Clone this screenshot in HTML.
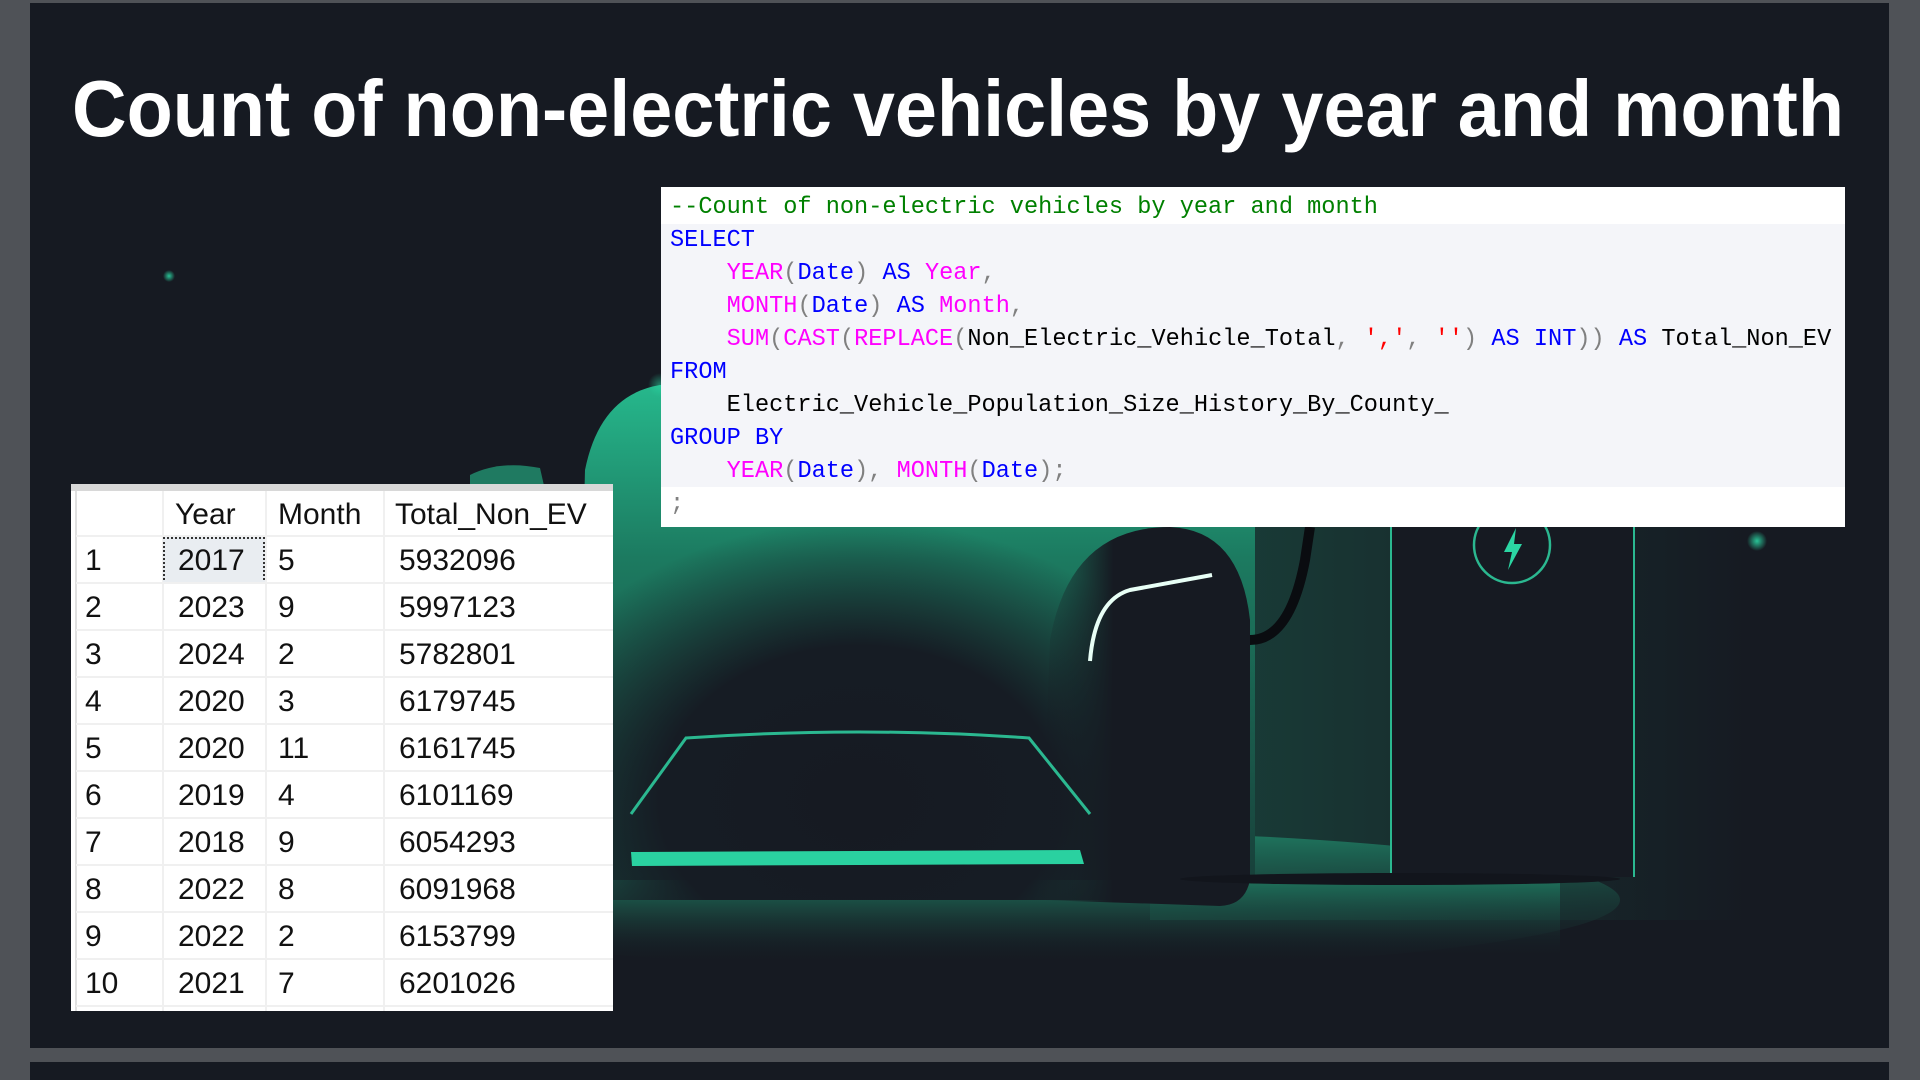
<!DOCTYPE html>
<html><head><meta charset="utf-8"><style>
*{margin:0;padding:0;box-sizing:border-box}
body{width:1920px;height:1080px;background:#4f5257;position:relative;overflow:hidden;font-family:"Liberation Sans",sans-serif}
#slide{position:absolute;left:30px;top:3px;width:1859px;height:1045px;background:#161a22;overflow:hidden}
#strip{position:absolute;left:30px;top:1062px;width:1859px;height:18px;background:#161a22}
#code{position:absolute;left:661px;top:187px;width:1184px;height:340px;background:#fff;font-family:"Liberation Mono",monospace;font-size:23.6px;color:#000}
#code .g{position:absolute;left:0;top:37px;width:100%;height:263px;background:#f4f5f9}
#code .l{position:absolute;left:9px;height:33px;line-height:33px;white-space:pre}
.c{color:#008000}.k{color:#0000ff}.f{color:#ff00ff}.p{color:#808080}.s{color:#ff0000}
#tbl{position:absolute;left:71px;top:484px;width:542px;height:527px;background:#fff;overflow:hidden;border-top:7px solid #d8d8d8}
#tbl .row{position:absolute;left:5px;width:537px;height:47px;border-bottom:2px solid #f0f0f0;font-size:30px;color:#111}
#tbl .row span{position:absolute;top:7px}
#tbl .vl{position:absolute;top:0;width:2px;height:527px;background:#f0f0f0}
</style></head><body>
<div id="slide">
<svg width="1859" height="1045" viewBox="30 3 1859 1045" style="position:absolute;left:0;top:0">
<defs>
<radialGradient id="gl" cx="0.5" cy="0.5" r="0.5"><stop offset="0" stop-color="#2bd6a3" stop-opacity="0.9"/><stop offset="1" stop-color="#2bd6a3" stop-opacity="0"/></radialGradient>
<linearGradient id="body" x1="0" y1="0" x2="0" y2="1"><stop offset="0" stop-color="#26b88c"/><stop offset="0.35" stop-color="#1c7a60"/><stop offset="1" stop-color="#18403a"/></linearGradient>
<linearGradient id="floor" x1="0" y1="0" x2="0" y2="1"><stop offset="0" stop-color="#1f7a61"/><stop offset="1" stop-color="#161a22" stop-opacity="0"/></linearGradient>
<linearGradient id="bg2" x1="0" y1="0" x2="1" y2="0"><stop offset="0" stop-color="#1a4a40"/><stop offset="1" stop-color="#161a22"/></linearGradient>
<radialGradient id="dark" cx="0.5" cy="0.75" r="0.7"><stop offset="0" stop-color="#161a22"/><stop offset="0.55" stop-color="#161c24"/><stop offset="1" stop-color="#161c24" stop-opacity="0"/></radialGradient>
<linearGradient id="arch" x1="0" y1="0" x2="1" y2="0"><stop offset="0" stop-color="#161a22" stop-opacity="0"/><stop offset="0.35" stop-color="#161a22"/><stop offset="1" stop-color="#161a22"/></linearGradient>
</defs>
<rect x="1150" y="500" width="600" height="420" fill="url(#bg2)" opacity="0.8"/>
<ellipse cx="1000" cy="900" rx="620" ry="70" fill="url(#floor)"/>
<rect x="560" y="880" width="1000" height="80" fill="url(#floor)" opacity="0.8"/>
<path d="M575 880 L585 470 Q600 395 660 385 L1200 385 Q1250 395 1255 470 L1255 880 Z" fill="url(#body)"/>
<rect x="600" y="500" width="520" height="400" fill="url(#dark)"/>
<path d="M1040 900 L1050 640 Q1070 527 1170 527 Q1240 530 1250 620 L1250 880 Q1245 905 1220 906 Z" fill="url(#arch)"/>
<path d="M631 814 L686 738 Q860 726 1029 738 L1090 814" fill="none" stroke="#2bb890" stroke-width="3"/>
<path d="M631 852 L1080 850 L1084 864 L632 866 Z" fill="#2ad1a0"/>
<path d="M1090 661 Q1095 600 1130 590 L1212 575" fill="none" stroke="#e8fff6" stroke-width="4"/>
<path d="M1250 640 Q1290 640 1305 560 L1310 527" fill="none" stroke="#0a0c10" stroke-width="10"/>
<path d="M470 475 Q500 460 540 468 L545 490 L470 492 Z" fill="#1f7a61"/>
<rect x="1390" y="527" width="245" height="350" fill="#161a22"/>
<line x1="1391" y1="527" x2="1391" y2="877" stroke="#2bb890" stroke-width="2"/>
<line x1="1634" y1="527" x2="1634" y2="877" stroke="#2bb890" stroke-width="2"/>
<ellipse cx="1400" cy="879" rx="220" ry="6" fill="#12151c"/>
<circle cx="1512" cy="545" r="38" fill="none" stroke="#2bb890" stroke-width="2.5"/>
<path d="M1516 528 L1504 552 L1512 552 L1508 570 L1522 544 L1514 544 Z" fill="#2bd6a3"/>
<circle cx="1757" cy="541" r="10" fill="url(#gl)"/>
<circle cx="169" cy="276" r="6" fill="url(#gl)"/>
<circle cx="660" cy="385" r="12" fill="url(#gl)" opacity="0.6"/>
<text x="72" y="136" fill="#fff" font-family="Liberation Sans, sans-serif" font-weight="bold" font-size="80" textLength="1772" lengthAdjust="spacingAndGlyphs">Count of non-electric vehicles by year and month</text>
</svg>
</div>
<div id="strip"></div>

<div id="code">
<div class="g"></div>
<div class="l" style="top:4px"><span class="c">--Count of non-electric vehicles by year and month</span></div>
<div class="l" style="top:37px"><span class="k">SELECT</span></div>
<div class="l" style="top:70px">    <span class="f">YEAR</span><span class="p">(</span><span class="k">Date</span><span class="p">)</span> <span class="k">AS</span> <span class="f">Year</span><span class="p">,</span></div>
<div class="l" style="top:103px">    <span class="f">MONTH</span><span class="p">(</span><span class="k">Date</span><span class="p">)</span> <span class="k">AS</span> <span class="f">Month</span><span class="p">,</span></div>
<div class="l" style="top:136px">    <span class="f">SUM</span><span class="p">(</span><span class="f">CAST</span><span class="p">(</span><span class="f">REPLACE</span><span class="p">(</span>Non_Electric_Vehicle_Total<span class="p">,</span> <span class="s">','</span><span class="p">,</span> <span class="s">''</span><span class="p">)</span> <span class="k">AS</span> <span class="k">INT</span><span class="p">))</span> <span class="k">AS</span> Total_Non_EV</div>
<div class="l" style="top:169px"><span class="k">FROM</span></div>
<div class="l" style="top:202px">    Electric_Vehicle_Population_Size_History_By_County_</div>
<div class="l" style="top:235px"><span class="k">GROUP BY</span></div>
<div class="l" style="top:268px">    <span class="f">YEAR</span><span class="p">(</span><span class="k">Date</span><span class="p">),</span> <span class="f">MONTH</span><span class="p">(</span><span class="k">Date</span><span class="p">);</span></div>
<div class="l" style="top:301px"><span class="p">;</span></div>
</div>

<div id="tbl">
<div class="vl" style="left:4px;background:#e0e0e0"></div>
<div class="vl" style="left:91px"></div>
<div class="vl" style="left:194px"></div>
<div class="vl" style="left:312px"></div>
<div class="row" style="top:0;height:46px"><span style="left:99px">Year</span><span style="left:202px">Month</span><span style="left:319px">Total_Non_EV</span></div>
<div style="position:absolute;left:92px;top:46px;width:102px;height:47px;background:#e9edf1;border:2px dotted #333"></div>
<div class="row" style="top:46px"><span style="left:9px">1</span><span style="left:102px">2017</span><span style="left:202px">5</span><span style="left:323px">5932096</span></div>
<div class="row" style="top:93px"><span style="left:9px">2</span><span style="left:102px">2023</span><span style="left:202px">9</span><span style="left:323px">5997123</span></div>
<div class="row" style="top:140px"><span style="left:9px">3</span><span style="left:102px">2024</span><span style="left:202px">2</span><span style="left:323px">5782801</span></div>
<div class="row" style="top:187px"><span style="left:9px">4</span><span style="left:102px">2020</span><span style="left:202px">3</span><span style="left:323px">6179745</span></div>
<div class="row" style="top:234px"><span style="left:9px">5</span><span style="left:102px">2020</span><span style="left:202px">11</span><span style="left:323px">6161745</span></div>
<div class="row" style="top:281px"><span style="left:9px">6</span><span style="left:102px">2019</span><span style="left:202px">4</span><span style="left:323px">6101169</span></div>
<div class="row" style="top:328px"><span style="left:9px">7</span><span style="left:102px">2018</span><span style="left:202px">9</span><span style="left:323px">6054293</span></div>
<div class="row" style="top:375px"><span style="left:9px">8</span><span style="left:102px">2022</span><span style="left:202px">8</span><span style="left:323px">6091968</span></div>
<div class="row" style="top:422px"><span style="left:9px">9</span><span style="left:102px">2022</span><span style="left:202px">2</span><span style="left:323px">6153799</span></div>
<div class="row" style="top:469px"><span style="left:9px">10</span><span style="left:102px">2021</span><span style="left:202px">7</span><span style="left:323px">6201026</span></div>
</div>
</body></html>
